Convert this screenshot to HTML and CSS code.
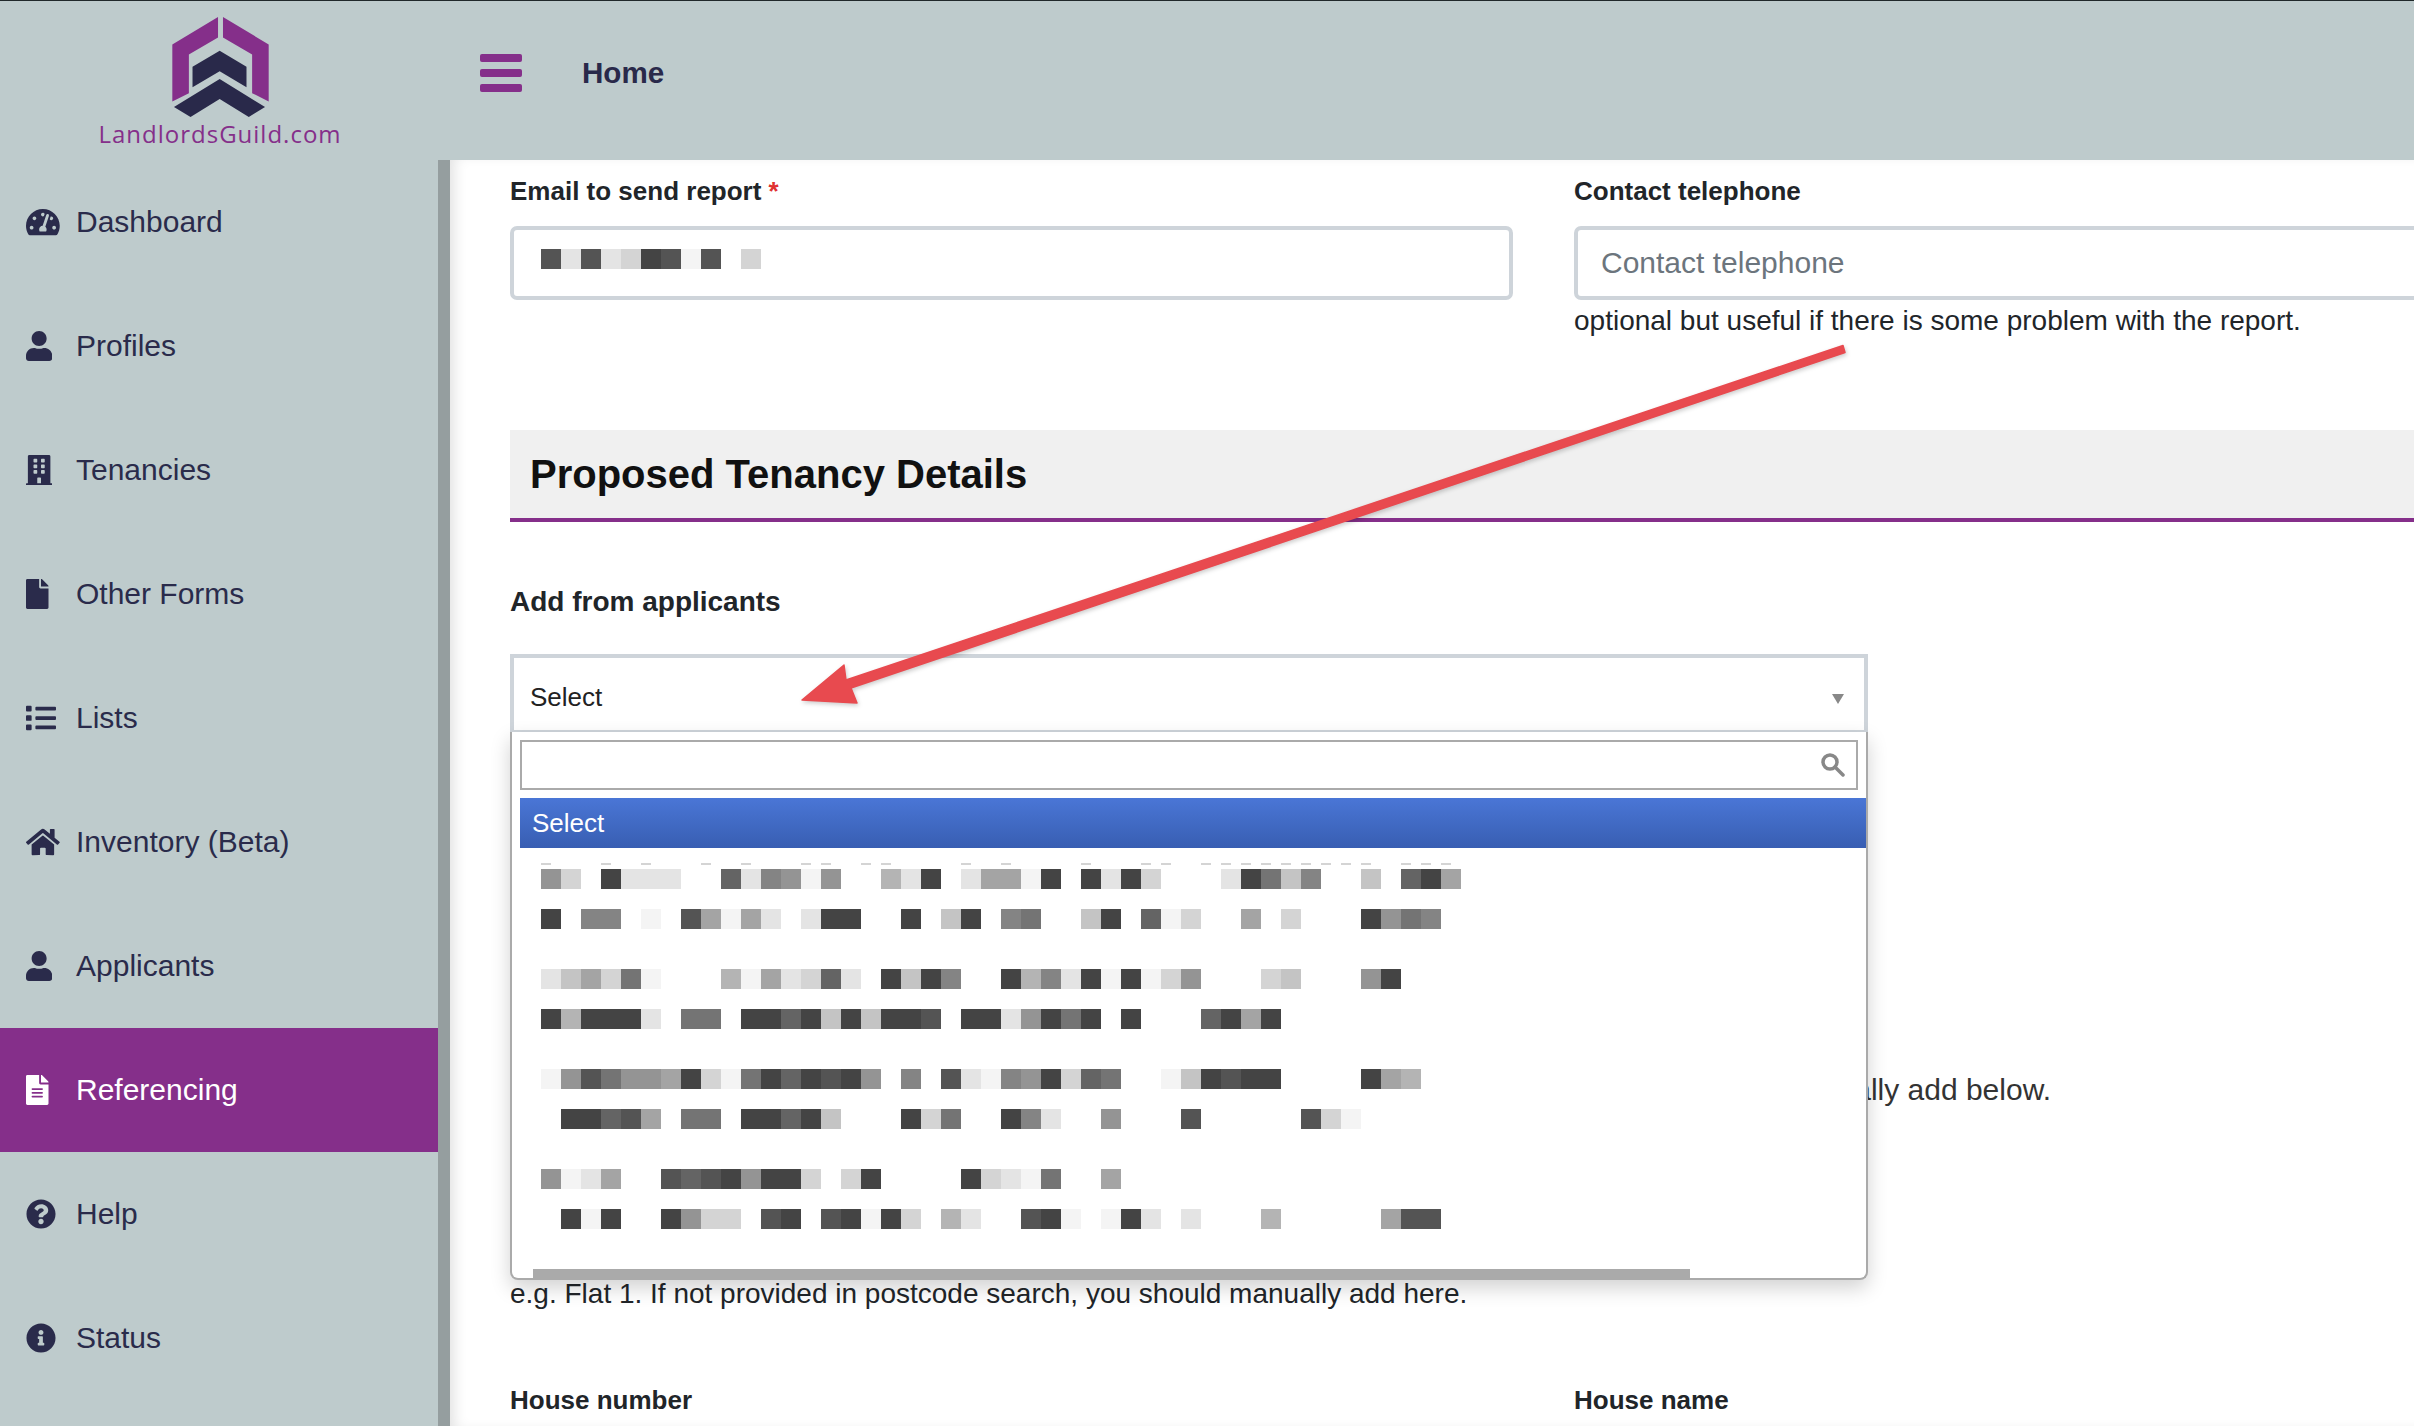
FILE: index.html
```html
<!doctype html>
<html lang="en">
    <head>
        <meta charset="UTF-8" />
        <meta name="viewport" content="width=device-width, initial-scale=1.0" />
        <title>LandlordsGuild.com - Referencing</title>
        <link rel="stylesheet" href="styles.css">
    </head>
    <body>
        <header class="topbar">
            <a class="brand" href="#">
                <svg class="brand-logo" viewBox="277 50 291 302">
                    <polygon fill="#852f8a" points="415,50 415,112 327,163 327,280 277,305 277,133" />
                    <polygon fill="#852f8a" points="430,50 568,133 568,305 518,280 518,163 430,112" />
                    <polygon fill="#29294a" points="420,152 501,200 501,262 420,214 338,262 338,200" />
                    <polygon fill="#29294a" points="420,237 557,322 508,352 420,298 332,352 282,322" />
                </svg>
                <span class="brand-name">LandlordsGuild.com</span>
            </a>
            <div class="top-nav">
                <button class="menu-toggle" type="button" aria-label="Menu">
                    <span></span><span></span><span></span>
                </button>
                <span class="page-title">Home</span>
            </div>
        </header>

        <div class="layout">
            <nav class="sidebar">
                <a class="nav-item" href="#">
                    <span class="nav-icon-wrap"><svg class="nav-icon" viewBox="0 0 576 512"><path d="M288 32C128.94 32 0 160.94 0 320c0 52.8 14.25 102.26 39.06 144.8 5.61 9.62 16.3 15.2 27.44 15.2h443c11.14 0 21.83-5.58 27.44-15.2C561.75 422.26 576 372.8 576 320c0-159.06-128.94-288-288-288zm0 64c14.71 0 26.58 10.13 30.32 23.65-1.11 2.26-2.64 4.23-3.45 6.67l-9.22 27.67c-5.13 3.49-10.97 6.01-17.64 6.01-17.67 0-32-14.33-32-32S270.33 96 288 96zM96 384c-17.67 0-32-14.33-32-32s14.33-32 32-32 32 14.33 32 32-14.33 32-32 32zm48-160c-17.67 0-32-14.33-32-32s14.33-32 32-32 32 14.33 32 32-14.33 32-32 32zm246.77-72.41l-61.33 184C343.13 347.33 352 364.54 352 384c0 11.72-3.38 22.55-8.88 32H232.88c-5.5-9.45-8.88-20.28-8.88-32 0-33.94 26.5-61.43 59.9-63.59l61.34-184.01c4.17-12.56 17.73-19.45 30.36-15.17 12.57 4.19 19.35 17.79 15.17 30.36zm14.66 57.2l15.52-46.55c3.47-1.29 7.13-2.23 11.05-2.23 17.67 0 32 14.33 32 32s-14.33 32-32 32c-11.38-.01-20.89-6.28-26.57-15.22zM480 384c-17.67 0-32-14.33-32-32s14.33-32 32-32 32 14.33 32 32-14.33 32-32 32z"/></svg></span>
                    Dashboard
                </a>
                <a class="nav-item" href="#">
                    <span class="nav-icon-wrap"><svg class="nav-icon" viewBox="0 0 448 512"><path d="M224 256c70.7 0 128-57.3 128-128S294.7 0 224 0 96 57.3 96 128s57.3 128 128 128zm89.6 32h-16.7c-22.2 10.2-46.9 16-72.9 16s-50.6-5.8-72.9-16h-16.7C60.2 288 0 348.2 0 422.4V464c0 26.5 21.5 48 48 48h352c26.5 0 48-21.5 48-48v-41.6c0-74.2-60.2-134.4-134.4-134.4z"/></svg></span>
                    Profiles
                </a>
                <a class="nav-item" href="#">
                    <span class="nav-icon-wrap"><svg class="nav-icon" viewBox="0 0 448 512"><path d="M436 480h-20V24c0-13.255-10.745-24-24-24H56C42.745 0 32 10.745 32 24v456H12c-6.627 0-12 5.373-12 12v20h448v-20c0-6.627-5.373-12-12-12zM128 76c0-6.627 5.373-12 12-12h40c6.627 0 12 5.373 12 12v40c0 6.627-5.373 12-12 12h-40c-6.627 0-12-5.373-12-12V76zm0 96c0-6.627 5.373-12 12-12h40c6.627 0 12 5.373 12 12v40c0 6.627-5.373 12-12 12h-40c-6.627 0-12-5.373-12-12v-40zm52 148h-40c-6.627 0-12-5.373-12-12v-40c0-6.627 5.373-12 12-12h40c6.627 0 12 5.373 12 12v40c0 6.627-5.373 12-12 12zm76 160h-64v-84c0-6.627 5.373-12 12-12h40c6.627 0 12 5.373 12 12v84zm64-172c0 6.627-5.373 12-12 12h-40c-6.627 0-12-5.373-12-12v-40c0-6.627 5.373-12 12-12h40c6.627 0 12 5.373 12 12v40zm0-96c0 6.627-5.373 12-12 12h-40c-6.627 0-12-5.373-12-12v-40c0-6.627 5.373-12 12-12h40c6.627 0 12 5.373 12 12v40zm0-96c0 6.627-5.373 12-12 12h-40c-6.627 0-12-5.373-12-12V76c0-6.627 5.373-12 12-12h40c6.627 0 12 5.373 12 12v40z"/></svg></span>
                    Tenancies
                </a>
                <a class="nav-item" href="#">
                    <span class="nav-icon-wrap"><svg class="nav-icon" viewBox="0 0 384 512"><path d="M224 136V0H24C10.7 0 0 10.7 0 24v464c0 13.3 10.7 24 24 24h336c13.3 0 24-10.7 24-24V160H248c-13.2 0-24-10.8-24-24zm160-14.1v6.1H256V0h6.1c6.4 0 12.5 2.5 17 7l97.9 98c4.5 4.5 7 10.6 7 16.9z"/></svg></span>
                    Other Forms
                </a>
                <a class="nav-item" href="#">
                    <span class="nav-icon-wrap"><svg class="nav-icon" viewBox="0 0 512 512"><path d="M80 368H16a16 16 0 0 0-16 16v64a16 16 0 0 0 16 16h64a16 16 0 0 0 16-16v-64a16 16 0 0 0-16-16zm0-320H16A16 16 0 0 0 0 64v64a16 16 0 0 0 16 16h64a16 16 0 0 0 16-16V64a16 16 0 0 0-16-16zm0 160H16a16 16 0 0 0-16 16v64a16 16 0 0 0 16 16h64a16 16 0 0 0 16-16v-64a16 16 0 0 0-16-16zm416 176H176a16 16 0 0 0-16 16v32a16 16 0 0 0 16 16h320a16 16 0 0 0 16-16v-32a16 16 0 0 0-16-16zm0-320H176a16 16 0 0 0-16 16v32a16 16 0 0 0 16 16h320a16 16 0 0 0 16-16V80a16 16 0 0 0-16-16zm0 160H176a16 16 0 0 0-16 16v32a16 16 0 0 0 16 16h320a16 16 0 0 0 16-16v-32a16 16 0 0 0-16-16z"/></svg></span>
                    Lists
                </a>
                <a class="nav-item" href="#">
                    <span class="nav-icon-wrap"><svg class="nav-icon" viewBox="0 0 576 512"><path d="M280.37 148.26L96 300.11V464a16 16 0 0 0 16 16l112.06-.29a16 16 0 0 0 15.92-16V368a16 16 0 0 1 16-16h64a16 16 0 0 1 16 16v95.64a16 16 0 0 0 16 16.05L464 480a16 16 0 0 0 16-16V300L295.67 148.26a12.19 12.19 0 0 0-15.3 0zM571.6 251.47L488 182.56V44.05a12 12 0 0 0-12-12h-56a12 12 0 0 0-12 12v72.61L318.47 43a48 48 0 0 0-61 0L4.34 251.47a12 12 0 0 0-1.6 16.9l25.5 31A12 12 0 0 0 45.15 301l235.22-193.74a12.19 12.19 0 0 1 15.3 0L530.9 301a12 12 0 0 0 16.9-1.6l25.5-31a12 12 0 0 0-1.7-16.93z"/></svg></span>
                    Inventory (Beta)
                </a>
                <a class="nav-item" href="#">
                    <span class="nav-icon-wrap"><svg class="nav-icon" viewBox="0 0 448 512"><path d="M224 256c70.7 0 128-57.3 128-128S294.7 0 224 0 96 57.3 96 128s57.3 128 128 128zm89.6 32h-16.7c-22.2 10.2-46.9 16-72.9 16s-50.6-5.8-72.9-16h-16.7C60.2 288 0 348.2 0 422.4V464c0 26.5 21.5 48 48 48h352c26.5 0 48-21.5 48-48v-41.6c0-74.2-60.2-134.4-134.4-134.4z"/></svg></span>
                    Applicants
                </a>
                <a class="nav-item active" href="#">
                    <span class="nav-icon-wrap"><svg class="nav-icon" viewBox="0 0 384 512"><path d="M224 136V0H24C10.7 0 0 10.7 0 24v464c0 13.3 10.7 24 24 24h336c13.3 0 24-10.7 24-24V160H248c-13.2 0-24-10.8-24-24zm64 236c0 6.6-5.4 12-12 12H108c-6.6 0-12-5.4-12-12v-8c0-6.6 5.4-12 12-12h168c6.6 0 12 5.4 12 12v8zm0-64c0 6.6-5.4 12-12 12H108c-6.6 0-12-5.4-12-12v-8c0-6.6 5.4-12 12-12h168c6.6 0 12 5.4 12 12v8zm0-72v8c0 6.6-5.4 12-12 12H108c-6.6 0-12-5.4-12-12v-8c0-6.6 5.4-12 12-12h168c6.6 0 12 5.4 12 12zm96-114.1v6.1H256V0h6.1c6.4 0 12.5 2.5 17 7l97.9 98c4.5 4.5 7 10.6 7 16.9z"/></svg></span>
                    Referencing
                </a>
                <a class="nav-item" href="#">
                    <span class="nav-icon-wrap"><svg class="nav-icon" viewBox="0 0 512 512"><path d="M504 256c0 136.997-111.043 248-248 248S8 392.997 8 256C8 119.083 119.043 8 256 8s248 111.083 248 248zM262.655 90c-54.497 0-89.255 22.957-116.549 63.758-3.536 5.286-2.353 12.415 2.715 16.258l34.699 26.31c5.205 3.947 12.621 3.008 16.665-2.122 17.864-22.658 30.113-35.797 57.303-35.797 20.429 0 45.698 13.148 45.698 32.958 0 14.976-12.363 22.667-32.534 33.976C247.128 238.528 216 254.941 216 296v4c0 6.627 5.373 12 12 12h56c6.627 0 12-5.373 12-12v-1.333c0-28.462 83.186-29.647 83.186-106.667 0-58.002-60.165-102-116.531-102zM256 338c-25.365 0-46 20.635-46 46 0 25.364 20.635 46 46 46s46-20.636 46-46c0-25.365-20.635-46-46-46z"/></svg></span>
                    Help
                </a>
                <a class="nav-item" href="#">
                    <span class="nav-icon-wrap"><svg class="nav-icon" viewBox="0 0 512 512"><path d="M256 8C119.043 8 8 119.083 8 256c0 136.997 111.043 248 248 248s248-111.003 248-248C504 119.083 392.957 8 256 8zm0 110c23.196 0 42 18.804 42 42s-18.804 42-42 42-42-18.804-42-42 18.804-42 42-42zm56 254c0 6.627-5.373 12-12 12h-88c-6.627 0-12-5.373-12-12v-24c0-6.627 5.373-12 12-12h12v-64h-12c-6.627 0-12-5.373-12-12v-24c0-6.627 5.373-12 12-12h64c6.627 0 12 5.373 12 12v100h12c6.627 0 12 5.373 12 12v24z"/></svg></span>
                    Status
                </a>
            </nav>

            <main class="content">
                <div class="form-row">
                    <div>
                        <label class="field-label">Email to send report <span class="required">*</span></label>
                        <div class="field-box">
                            <div class="redact" data-shades="5e5ed45f5.d"></div>
                        </div>
                    </div>
                    <div>
                        <label class="field-label" for="contact_telephone">Contact telephone</label>
                        <input class="field-box" id="contact_telephone" type="text" placeholder="Contact telephone" />
                        <p class="help-text">optional but useful if there is some problem with the report.</p>
                    </div>
                </div>

                <h2 class="section-title">Proposed Tenancy Details</h2>

                <label class="field-label add-label">Add from applicants</label>

                <div class="select-wrap">
                    <div class="select-box">
                        <span>Select</span>
                        <span class="select-caret"></span>
                    </div>
                    <div class="dropdown">
                        <div class="dropdown-search">
                            <input type="text" aria-label="Search" />
                            <svg class="search-icon" viewBox="0 0 24 24">
                                <circle cx="9" cy="9" r="7" />
                                <line x1="14" y1="14" x2="22" y2="22" />
                            </svg>
                        </div>
                        <div class="dropdown-option">Select</div>
                        <div class="dropdown-results">
                            <div class="redact redact-thin" data-shades="d.....d...d.....d...d.....d.d...d.d.......d...d.......d.....d.d...d.d.d.d.d.d.d.d.d...d.d.d."></div>
                            <div class="result">
                                <div class="redact" data-shades="9d.4eee..6e89f9..be4.eaaf4.4e4d...e47c8..c.64a"></div>
                                <div class="redact" data-shades="4.88.f.5afae.e44..4.c4.87..c4.6fd..a.d...4978"></div>
                            </div>
                            <div class="result">
                                <div class="redact" data-shades="ecad7f...bfaed6e.4c48..4b8e4f4fd9...dc...94"></div>
                                <div class="redact" data-shades="4b444e.77.4464c4c445.44e9474.4...64a4"></div>
                            </div>
                            <div class="result">
                                <div class="redact" data-shades="f95799a4df7464549.8.5ef894d67..fc4544....4ab"></div>
                                <div class="redact" data-shades=".4465a.77.4464c...4d7..48e..9...5.....5df"></div>
                            </div>
                            <div class="result">
                                <div class="redact" data-shades="9fea..5654944d.d4....4def7..a"></div>
                                <div class="redact" data-shades=".4f4..49dd.54.54f4d.be..54f.f4e.e...b.....a55"></div>
                            </div>
                        </div>
                        <div class="dropdown-scroll"></div>
                    </div>
                </div>

                <p class="help-text behind-text">If the address is not found in the postcode search, you should manually add below.</p>
                <p class="help-text flat-text">e.g. Flat 1. If not provided in postcode search, you should manually add here.</p>

                <div class="form-row house-row">
                    <label class="field-label">House number</label>
                    <label class="field-label">House name</label>
                </div>
            </main>
        </div>

        <!-- annotation drawn on top of the screenshot -->
        <svg class="annotation" viewBox="0 0 2414 1426">
            <polygon points="1843,345.5 1845,352.5 851,688 857,703 802,700 844,665 846,680" />
        </svg>

        <script src="pixels.js"></script>
    </body>
</html>
```

FILE: styles.css
```css
* {
    box-sizing: border-box;
}
body {
    font-family: "Liberation Sans", Arial, sans-serif;
    background-color: #ffffff;
    color: #212529;
    margin: 0;
    height: 100vh;
    overflow: hidden;
    position: relative;
}
a {
    text-decoration: none;
    color: inherit;
}

/* top bar */
.topbar {
    display: flex;
    height: 160px;
    background-color: #becbcc;
    border-top: 1px solid #20282a;
}
.brand {
    width: 440px;
    flex-shrink: 0;
    display: flex;
    flex-direction: column;
    align-items: center;
    padding-top: 16px;
}
.brand-logo {
    width: 97px;
    height: 100px;
}
.brand-name {
    font-family: "Open Sans", sans-serif;
    font-size: 24px;
    line-height: 34px;
    letter-spacing: 1px;
    color: #852f8a;
}
.top-nav {
    display: flex;
    align-items: center;
    height: 144px;
    padding-left: 40px;
}
.menu-toggle {
    display: flex;
    flex-direction: column;
    gap: 7px;
    width: 42px;
    padding: 0;
    border: none;
    background: none;
}
.menu-toggle span {
    display: block;
    height: 8px;
    border-radius: 2px;
    background-color: #852f8a;
}
.page-title {
    margin-left: 60px;
    font-size: 29.6px;
    font-weight: bold;
    color: #29294a;
}

/* sidebar */
.layout {
    display: flex;
    height: 1266px;
}
.sidebar {
    width: 450px;
    flex-shrink: 0;
    background-color: #becbcc;
    border-right: 12px solid #959e9f;
}
.nav-item {
    display: flex;
    align-items: center;
    height: 124px;
    padding-left: 26px;
    font-size: 30px;
    color: #2a2b4b;
}
.nav-item.active {
    background-color: #852f8a;
    color: #ffffff;
}
.nav-icon-wrap {
    display: flex;
    width: 50px;
    flex-shrink: 0;
}
.nav-icon {
    height: 30px;
    width: auto;
    fill: currentColor;
}

/* form */
.content {
    flex: 1;
    min-width: 0;
    padding: 16px 0 0 60px;
    overflow: hidden;
    box-shadow: inset 10px 0 14px -6px rgba(0, 0, 0, 0.12);
}
.form-row {
    display: grid;
    grid-template-columns: 1003px 1003px;
    column-gap: 61px;
}
.field-label {
    display: block;
    font-size: 26px;
    line-height: 30px;
    font-weight: bold;
    color: #212529;
}
.required {
    color: #e03131;
}
.field-box {
    display: flex;
    width: 100%;
    height: 74px;
    margin-top: 20px;
    padding: 19px 23px 0 27px;
    border: 4px solid #ced4da;
    border-radius: 7px;
    background-color: #ffffff;
}
input.field-box {
    padding: 0 23px;
    font-family: inherit;
    font-size: 30px;
    color: #212529;
}
input.field-box::placeholder {
    color: #6c757d;
    opacity: 1;
}
.help-text {
    margin: 3px 0 0;
    font-size: 28px;
    line-height: 36px;
    white-space: nowrap;
}
.section-title {
    display: flex;
    align-items: center;
    height: 92px;
    margin: 91px 0 0;
    padding-left: 20px;
    font-size: 40px;
    color: #111111;
    background-color: #f0f0f0;
    border-bottom: 4px solid #852f8a;
}
.add-label {
    margin-top: 65px;
    font-size: 28px;
}

/* select2 style dropdown */
.select-wrap {
    position: relative;
    width: 1358px;
    margin-top: 37px;
}
.select-box {
    display: flex;
    justify-content: space-between;
    align-items: center;
    height: 78px;
    padding: 6px 20px 0 16px;
    font-size: 26px;
    color: #222222;
    border: 4px solid #ced4da;
    border-bottom-width: 2px;
}
.select-caret {
    width: 0;
    height: 0;
    margin-top: 4px;
    border-left: 6px solid transparent;
    border-right: 6px solid transparent;
    border-top: 10px solid #888888;
}
.dropdown {
    position: absolute;
    top: 100%;
    left: 0;
    z-index: 2;
    display: flex;
    flex-direction: column;
    width: 100%;
    height: 548px;
    padding-top: 8px;
    background-color: #ffffff;
    border: 2px solid #aaaaaa;
    border-top: none;
    border-radius: 0 0 8px 8px;
    box-shadow: 0 8px 20px rgba(0, 0, 0, 0.18);
}
.dropdown-search {
    display: flex;
    align-items: center;
    height: 50px;
    margin: 0 8px;
    padding-right: 11px;
    border: 2px solid #aaaaaa;
}
.dropdown-search input {
    flex: 1;
    height: 100%;
    border: none;
    outline: none;
    background: none;
}
.search-icon {
    width: 24px;
    height: 24px;
    fill: none;
    stroke: #888888;
    stroke-width: 3.5;
    stroke-linecap: round;
}
.dropdown-option {
    height: 50px;
    margin: 8px 0 0 8px;
    padding-left: 12px;
    font-size: 26px;
    line-height: 50px;
    color: #ffffff;
    background: linear-gradient(#4a76d6, #385eb2);
}
.dropdown-results {
    flex: 1;
    min-height: 0;
    overflow: hidden;
    padding: 15px 0 0 29px;
}
.result {
    display: flex;
    flex-direction: column;
    gap: 20px;
    margin-bottom: 40px;
}
.redact {
    display: flex;
    height: 20px;
}
.redact span {
    width: 20px;
    flex-shrink: 0;
}
.redact-thin {
    height: 2px;
    margin-bottom: 4px;
}
.redact-thin span {
    width: 10px;
}
.dropdown-scroll {
    flex-shrink: 0;
    width: 1157px;
    height: 9px;
    margin-left: 21px;
    background-color: #aaaaaa;
}
.behind-text {
    width: 1541px;
    margin-top: 340px;
    font-size: 30px;
    text-align: right;
    color: #333333;
}
.flat-text {
    margin-top: 168px;
}
.house-row {
    margin-top: 73px;
}

/* red arrow annotation */
.annotation {
    position: absolute;
    top: 0;
    left: 0;
    z-index: 3;
    width: 2414px;
    height: 1426px;
    fill: #e84a4f;
    stroke: #e84a4f;
    stroke-width: 1.5;
    stroke-linejoin: round;
    pointer-events: none;
    filter: drop-shadow(1px 2px 2px rgba(0, 0, 0, 0.2));
}
```

FILE: pixels.js
```js
// Fill the blurred-out blocks: each character is the grey level of a cell, "." is blank
document.querySelectorAll(".redact").forEach(function (row) {
    row.dataset.shades.split("").forEach(function (shade) {
        const cell = document.createElement("span");
        if (shade !== ".") {
            const grey = parseInt(shade, 16) * 16 + 4;
            cell.style.backgroundColor = `rgb(${grey}, ${grey}, ${grey})`;
        }
        row.appendChild(cell);
    });
});
```
